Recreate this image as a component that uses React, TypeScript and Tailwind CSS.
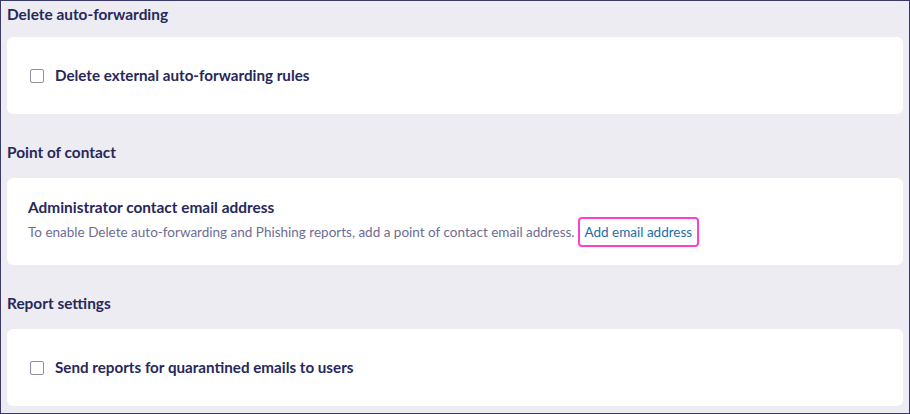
import React from "react";

function Checkbox() {
  return (
    <span className="inline-block w-[14px] h-[14px] rounded-[2px] border border-[#8f8fa8] bg-white shrink-0" />
  );
}

export default function App() {
  return (
    <div
      className="w-[910px] h-[414px] bg-[#edecf3] border border-[#3b3968] box-border overflow-hidden"
      style={{ fontFamily: "Lato, 'Open Sans', sans-serif" }}
    >
      <div className="px-[6px] flex flex-col">
        <h2 className="h-[26px] mt-[1px] flex items-center text-[15.4px] font-bold text-[#27285a]">
          Delete auto-forwarding
        </h2>
        <div className="mt-[9px] h-[77px] bg-white rounded-[6px] flex items-center pl-[23px] gap-[11px]">
          <Checkbox />
          <span className="text-[15.2px] font-bold text-[#27285a]">Delete external auto-forwarding rules</span>
        </div>
        <h2 className="mt-[26px] h-[26px] flex items-center text-[15.4px] font-bold text-[#27285a]">
          Point of contact
        </h2>
        <div className="mt-[12px] h-[87px] bg-white rounded-[6px] flex flex-col justify-center pl-[21px]">
          <div className="text-[15.4px] font-bold text-[#27285a] leading-[20px]">
            Administrator contact email address
          </div>
          <div className="text-[13.5px] text-[#6e6c93] leading-[20px] flex items-center">
            <span>To enable Delete auto-forwarding and Phishing reports, add a point of contact email address.</span>
            <span className="ml-[3px] px-[5px] py-[3px] border-2 border-[#ff3fd2] rounded-[4px] text-[#1b6ea8]">
              Add email address
            </span>
          </div>
        </div>
        <h2 className="mt-[26px] h-[26px] flex items-center text-[15.4px] font-bold text-[#27285a]">
          Report settings
        </h2>
        <div className="mt-[12px] h-[77px] bg-white rounded-[6px] flex items-center pl-[23px] gap-[11px]">
          <Checkbox />
          <span className="text-[15.2px] font-bold text-[#27285a]">Send reports for quarantined emails to users</span>
        </div>
      </div>
    </div>
  );
}
